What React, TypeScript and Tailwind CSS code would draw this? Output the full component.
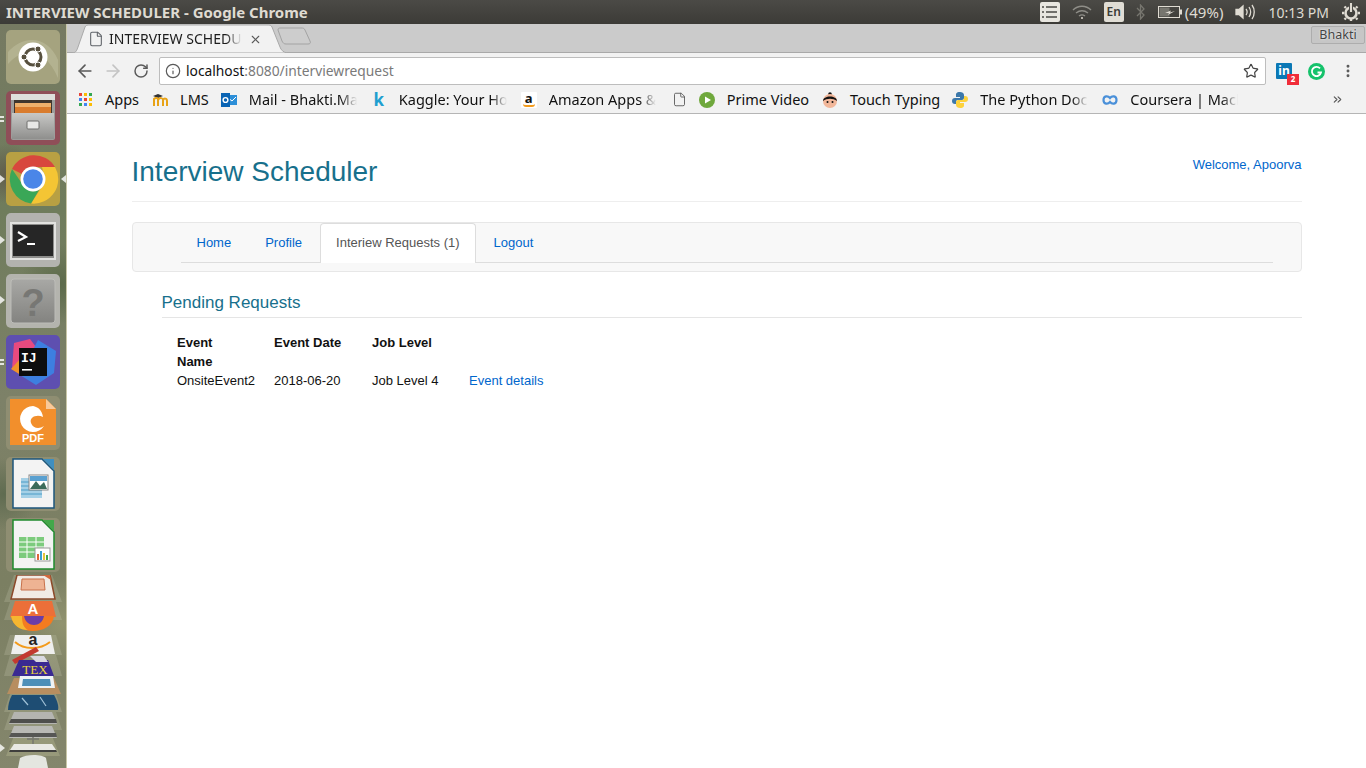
import { ArrowLeft, ArrowRight, ChevronsRight, EllipsisVertical, File, Info, RotateCw, Star, X } from 'lucide-react';

const uiFont = "font-['Noto_Sans',sans-serif]";

function UbuntuIcon() {
  return (
    <svg width="54" height="54" viewBox="0 0 54 54">
      <path d="M2 22 C18 4 42 6 52 30 L52 48 C40 20 20 14 2 34Z" fill="#c6c5a6" opacity="0.45" />
      <circle cx="27" cy="27" r="14.5" fill="#fff" />
      <circle cx="27" cy="27" r="8" fill="none" stroke="#57503f" strokeWidth="3" />
      <circle cx="18" cy="27" r="3" fill="#57503f" stroke="#fff" />
      <circle cx="32" cy="19" r="3" fill="#57503f" stroke="#fff" />
      <circle cx="32" cy="35" r="3" fill="#57503f" stroke="#fff" />
    </svg>
  );
}

function FilesIcon() {
  return (
    <svg width="54" height="54" viewBox="0 0 54 54">
      <defs>
        <linearGradient id="cabinet" x1="0" y1="0" x2="0" y2="1">
          <stop offset="0" stopColor="#c8c8c6" />
          <stop offset="1" stopColor="#8f8f8d" />
        </linearGradient>
      </defs>
      <rect x="5" y="3" width="44" height="46" rx="2" fill="#9d9d9b" />
      <rect x="5" y="3" width="44" height="6" fill="#dededc" />
      <rect x="8" y="9" width="38" height="13" fill="#3f362e" />
      <rect x="9" y="12" width="36" height="4" fill="#eeb06c" />
      <rect x="9" y="16" width="36" height="6" fill="#d97c2e" />
      <rect x="6" y="22" width="42" height="26" fill="url(#cabinet)" />
      <rect x="21" y="30" width="12" height="8" rx="1" fill="#e8e8e6" stroke="#6f6f6d" />
    </svg>
  );
}

function ChromeIcon() {
  return (
    <svg width="54" height="54" viewBox="0 0 54 54">
      <path d="M6 17 A24.5 24.5 0 0 1 49 15 L27 15 A12 12 0 0 0 16 22Z" fill="#d8473d" />
      <path d="M49 15 A24.5 24.5 0 0 1 25 51.5 L37 33 A12 12 0 0 0 37 19 L36 15Z" fill="#f4c534" />
      <path d="M6 17 L17 33 A12 12 0 0 0 33 38 L25 51.5 A24.5 24.5 0 0 1 6 17Z" fill="#3aa757" />
      <circle cx="27" cy="27" r="12.5" fill="#fff" />
      <circle cx="27" cy="27" r="9.8" fill="#4a86e8" />
    </svg>
  );
}

function TerminalIcon() {
  return (
    <svg width="54" height="54" viewBox="0 0 54 54">
      <rect x="4" y="9" width="46" height="38" fill="#e2e2e0" />
      <rect x="6" y="11" width="42" height="34" fill="#8d8d8b" />
      <rect x="7" y="12" width="40" height="31" fill="#262626" />
      <path d="M12 19 L20 24 L12 28" fill="none" stroke="#fff" strokeWidth="2.2" />
      <path d="M21 31 H29" stroke="#fff" strokeWidth="2" />
    </svg>
  );
}

function HelpIcon() {
  return (
    <svg width="54" height="54" viewBox="0 0 54 54">
      <defs>
        <linearGradient id="helpface" x1="0" y1="0" x2="0" y2="1">
          <stop offset="0" stopColor="#a8a8a5" />
          <stop offset="1" stopColor="#838380" />
        </linearGradient>
      </defs>
      <rect x="5" y="5" width="44" height="44" rx="3" fill="url(#helpface)" stroke="#bcbcb8" />
      <text x="27" y="42" textAnchor="middle" fontSize="38" fontWeight="700" fill="#777774" fontFamily="'Liberation Sans', sans-serif">?</text>
    </svg>
  );
}

function IdeaIcon() {
  return (
    <svg width="54" height="54" viewBox="0 0 54 54">
      <path d="M8 8 L24 4 L30 12 L14 38 L6 34Z" fill="#e84a7f" />
      <path d="M5 34 L14 24 L18 42Z" fill="#f0932b" />
      <path d="M32 5 L50 16 L48 38 L30 50 L14 40Z" fill="#3d7fe0" />
      <rect x="13" y="13" width="28" height="28" fill="#0d0d0d" />
      <text x="15" y="27" fontSize="13" fontWeight="700" fill="#fff" fontFamily="'Liberation Mono', monospace">IJ</text>
      <rect x="16" y="34" width="10" height="1.6" fill="#fff" />
    </svg>
  );
}

function PdfIcon() {
  return (
    <svg width="54" height="54" viewBox="0 0 54 54">
      <path d="M4 3 H40 L50 13 V49 H4Z" fill="#f28f2c" />
      <path d="M40 3 L50 13 H40Z" fill="#f8c99a" />
      <path d="M27 10 A13 13 0 1 0 38 30 C34 33 27 33 25 27 C23 21 31 18 37 21 C36 14 32 11 27 10Z" fill="#fff" />
      <text x="27" y="46" textAnchor="middle" fontSize="11" fontWeight="700" fill="#fff" fontFamily="'Liberation Sans', sans-serif">PDF</text>
    </svg>
  );
}

function DrawIcon() {
  return (
    <svg width="54" height="54" viewBox="0 0 54 54">
      <path d="M7 2 H36 L48 14 V51 H7Z" fill="#f3f3f3" stroke="#1c567c" strokeWidth="1.5" />
      <path d="M37 2 H48 V13Z" fill="#3f8fc0" />
      <path d="M15 21 H36 V41 H15Z" fill="#a5d0e6" />
      <path d="M15 25 H36 M15 29 H36 M15 33 H36 M15 37 H36" stroke="#4b9cc6" />
      <rect x="23" y="18" width="19" height="15" fill="#fff" stroke="#888" />
      <path d="M24 32 L30 24 L34 29 L38 25 L41 32Z" fill="#3c6b5b" />
      <rect x="24" y="19" width="17" height="5" fill="#5aa0d0" />
    </svg>
  );
}

function CalcIcon() {
  return (
    <svg width="54" height="54" viewBox="0 0 54 54">
      <path d="M7 2 H36 L48 14 V51 H7Z" fill="#f3f3f3" stroke="#1f8a2e" strokeWidth="1.5" />
      <path d="M37 2 H48 V13Z" fill="#43a84a" />
      <rect x="13" y="19" width="25" height="21" fill="#7ccb7d" />
      <path d="M13 24 H38 M13 29 H38 M13 34 H38 M21 19 V40 M30 19 V40" stroke="#fff" />
      <rect x="29" y="30" width="15" height="13" fill="#fff" stroke="#999" />
      <rect x="31" y="36" width="2" height="6" fill="#e0663a" />
      <rect x="34" y="33" width="2" height="9" fill="#3c9fd0" />
      <rect x="37" y="35" width="2" height="7" fill="#e8c43a" />
      <rect x="40" y="37" width="2" height="5" fill="#43a84a" />
    </svg>
  );
}

function CollapsedStack() {
  return (
    <svg width="67" height="193" viewBox="0 575 67 193" className="block">
      <g fill="#d8d8c0" opacity="0.2">
        <path d="M14 575 H52 L62 602 H4Z" />
        <path d="M10 602 H56 L62 620 H4Z" />
        <path d="M10 635 H56 L62 655 H4Z" />
        <path d="M10 655 H56 L62 676 H4Z" />
        <path d="M10 694 H56 L62 712 H4Z" />
        <path d="M10 712 H56 L62 730 H4Z" />
        <path d="M14 736 H52 L60 756 H6Z" fill="#e8e8b8" />
      </g>
      <path d="M17 575 H50 L55 599 H11Z" fill="#f1ebe4" stroke="#8c4a2a" strokeWidth="1.5" />
      <path d="M43 575 H50 L51 580Z" fill="#d2693c" />
      <path d="M22 579 H44 L45 590 H21Z" fill="#eeb393" stroke="#c8714a" />
      <path d="M15 601 H52 L56 617 H10Z" fill="#ec6f39" />
      <text x="33" y="614" textAnchor="middle" fontSize="15" fontWeight="700" fill="#fff" fontFamily="'Liberation Sans', sans-serif">A</text>
      <path d="M11 616 H54 C52 636 14 636 11 616Z" fill="#f47b20" />
      <path d="M24 616 H44 C42 628 26 628 24 616Z" fill="#6a3da8" />
      <path d="M11 616 H22 C22 624 24 628 28 630 C20 630 13 626 11 616Z" fill="#f6b730" />
      <path d="M15 635 H51 L55 654 H11Z" fill="#efefee" />
      <text x="33" y="645" textAnchor="middle" fontSize="16" fontWeight="700" fill="#222" fontFamily="'Liberation Sans', sans-serif">a</text>
      <path d="M15 642 C24 650 40 650 50 642" fill="none" stroke="#f39b1c" strokeWidth="2" />
      <path d="M12 660 L36 647 L39 651 L15 664Z" fill="#c2392f" />
      <path d="M19 660 H48 L54 676 H12Z" fill="#3a2a92" />
      <path d="M30 656 H44 L48 662 H36Z" fill="#d9d9e0" />
      <text x="35" y="674" textAnchor="middle" fontSize="13" fill="#e8d33a" fontFamily="'Liberation Serif', serif">TEX</text>
      <path d="M14 678 H54 L61 694 H7Z" fill="#b78e60" />
      <path d="M20 676 H53 L55 688 H18Z" fill="#eef2f4" />
      <path d="M23 679 H50 L51 686 H22Z" fill="#4d8fb8" />
      <path d="M12 695 H54 C57 700 59 706 58 710 H8 C8 706 9 700 12 695Z" fill="#1e4d73" />
      <path d="M22 698 L28 705 M40 697 L46 706" stroke="#9fc0d6" strokeWidth="1.2" />
      <path d="M14 712 H52 L57 724 H9Z" fill="#b4b4b0" />
      <path d="M11 719 H56 L57 723 H9Z" fill="#4e4e4c" />
      <path d="M14 726 H52 L57 738 H9Z" fill="#b9b9b5" />
      <path d="M11 733 H56 L57 737 H9Z" fill="#565654" />
      <path d="M14 744 H52 L56 750 H10Z" fill="#e9e9e4" />
      <path d="M33 737 V744 M27 739 H39" stroke="#77776f" strokeWidth="1.5" />
      <path d="M10 750 H56 L57 752 H9Z" fill="#3f3f3d" />
      <path d="M20 758 C26 754 42 754 46 758 L48 768 H18Z" fill="#e4e6e0" />
    </svg>
  );
}

function Launcher() {
  return (
    <div className="relative flex w-[67px] shrink-0 flex-col overflow-hidden border-r border-[#c9c7a8] bg-[radial-gradient(circle_at_8px_150px,#5f5a4a_0,transparent_30px),radial-gradient(circle_at_60px_260px,#5c6a4a_0,transparent_40px),radial-gradient(circle_at_4px_470px,#5f6b50_0,transparent_36px),radial-gradient(circle_at_62px_600px,#91936f_0,transparent_50px),linear-gradient(180deg,#767a62_0%,#6f7c5c_25%,#7d8168_50%,#7b7f62_75%,#84866c_100%)]">
      <div className="flex flex-col gap-[7px] pl-[6px] pt-[6px]">
        <div className="flex size-[54px] items-center justify-center rounded-[5px] bg-[#a5a37f]"><UbuntuIcon /></div>
        <div className="flex size-[54px] items-center justify-center rounded-[5px] bg-[#8f4e58]"><FilesIcon /></div>
        <div className="flex size-[54px] items-center justify-center rounded-[5px] bg-[#b8a043]"><ChromeIcon /></div>
        <div className="flex size-[54px] items-center justify-center rounded-[5px] bg-[#b3b3af]"><TerminalIcon /></div>
        <div className="flex size-[54px] items-center justify-center rounded-[5px] bg-[#b4b4ae]"><HelpIcon /></div>
        <div className="flex size-[54px] items-center justify-center rounded-[5px] bg-[#5e4fb0]"><IdeaIcon /></div>
        <div className="flex size-[54px] items-center justify-center rounded-[5px] bg-[#8f8e72]"><PdfIcon /></div>
        <div className="flex size-[54px] items-center justify-center rounded-[5px] bg-[#8f8e72]"><DrawIcon /></div>
        <div className="flex size-[54px] items-center justify-center rounded-[5px] bg-[#8f8e72]"><CalcIcon /></div>
      </div>
      <div className="mt-[3px]"><CollapsedStack /></div>
      <span className="absolute left-0 top-[92px] h-[2px] w-[4px] bg-white/80" />
      <span className="absolute left-0 top-[96px] h-[2px] w-[4px] bg-white/80" />
      <span className="absolute left-0 top-[151px] h-0 w-0 border-y-[4px] border-l-[5px] border-y-transparent border-l-white/80" />
      <span className="absolute right-0 top-[151px] h-0 w-0 border-y-[4px] border-r-[5px] border-y-transparent border-r-white/80" />
      <span className="absolute left-0 top-[212px] h-0 w-0 border-y-[4px] border-l-[5px] border-y-transparent border-l-white/80" />
      <span className="absolute left-0 top-[272px] h-0 w-0 border-y-[4px] border-l-[5px] border-y-transparent border-l-white/80" />
      <span className="absolute left-0 top-[335px] h-[2px] w-[4px] bg-white/80" />
      <span className="absolute left-0 top-[339px] h-[2px] w-[4px] bg-white/80" />
      <span className="absolute left-0 top-[720px] h-0 w-0 border-y-[4px] border-l-[5px] border-y-transparent border-l-white/80" />
    </div>
  );
}

function TopBar() {
  return (
    <div className={`flex h-[24px] shrink-0 items-center justify-between bg-gradient-to-b from-[#4b4a46] to-[#3c3b37] pl-[6px] pr-[6px] text-[#dfdbd2] ${uiFont}`}>
      <span className="text-[15px] font-bold">INTERVIEW SCHEDULER - Google Chrome</span>
      <div className="flex items-center">
        <svg width="20" height="20" viewBox="0 0 20 20">
          <rect x="0" y="0" width="20" height="20" rx="2" fill="#e8e6e0" />
          <path d="M6 5 H17 M6 10 H17 M6 15 H17" stroke="#4a4945" strokeWidth="1.4" />
          <path d="M2 5 H4 M2 10 H4 M2 15 H4" stroke="#4a4945" strokeWidth="1.4" />
        </svg>
        <svg className="ml-[12px]" width="20" height="16" viewBox="0 0 20 16" fill="none" stroke="#8f8e88" strokeWidth="1.4">
          <path d="M1 6 C6 1 14 1 19 6" />
          <path d="M4 9 C8 6 12 6 16 9" />
          <path d="M7 12 C9 10.5 11 10.5 13 12" />
          <circle cx="10" cy="14" r="1" fill="#dfdbd2" stroke="none" />
        </svg>
        <span className="ml-[12px] flex size-[20px] items-center justify-center rounded-[2px] bg-[#e0ddd5] text-[12px] font-semibold text-[#3c3b37]">En</span>
        <svg className="ml-[12px]" width="9" height="16" viewBox="0 0 9 16" fill="none" stroke="#77766f" strokeWidth="1.3">
          <path d="M1 4 L8 11 L4.5 15 V1 L8 5 L1 12" />
        </svg>
        <svg className="ml-[13px]" width="24" height="12" viewBox="0 0 24 12" fill="none">
          <rect x="0.5" y="0.5" width="21" height="11" stroke="#dfdbd2" />
          <rect x="1.5" y="1.5" width="10" height="9" fill="#77766f" />
          <path d="M7 7 L13 4.5 L12 6.5 L17 5 L10 9 L11 7Z" fill="#dfdbd2" />
          <rect x="22" y="3.5" width="2" height="5" fill="#dfdbd2" />
        </svg>
        <span className="ml-[3px] text-[15px]">(49%)</span>
        <svg className="ml-[12px]" width="20" height="16" viewBox="0 0 20 16" fill="none" stroke="#dfdbd2" strokeWidth="1.3">
          <path d="M1 5.5 H4 L8 2 V14 L4 10.5 H1Z" fill="#dfdbd2" />
          <path d="M11 5 C12.5 7 12.5 9 11 11" />
          <path d="M14 3 C16 6 16 10 14 13" />
          <path d="M17 1 C20 5 20 11 17 15" />
        </svg>
        <span className="ml-[13px] text-[14px]">10:13 PM</span>
        <svg className="ml-[13px]" width="18" height="18" viewBox="0 0 18 18" fill="none">
          <circle cx="9" cy="10" r="5.5" stroke="#dfdbd2" strokeWidth="2.6" />
          <path d="M2 10 H0 M18 10 H16 M4 5 L2.5 3.5 M14 5 L15.5 3.5 M4 15 L2.5 16.5 M14 15 L15.5 16.5 M9 16 V18" stroke="#dfdbd2" strokeWidth="2.4" />
          <path d="M9 0 V9" stroke="#3f3e3a" strokeWidth="4" />
          <path d="M9 0 V9" stroke="#dfdbd2" strokeWidth="2.2" />
        </svg>
      </div>
    </div>
  );
}

function TabStrip() {
  return (
    <div className={`relative flex h-[29px] shrink-0 items-start border-b border-[#a9a9a9] bg-[#cbcbcb] ${uiFont}`}>
      <svg className="absolute left-[5px] top-0" width="240" height="29" viewBox="0 0 240 29">
        <path d="M0 29 C4 29 5 26 6 23 L13 3 C14 1 15 1 18 1 H195 C198 1 199 1 200 3 L208 23 C209 26 211 28 215 29Z" fill="#f2f2f2" stroke="#a9a9a9" />
        <path d="M206 6 C206 4 207 4 209 4 H229 C231 4 232 4 233 6 L238 17 C239 19 238 20 236 20 H214 C212 20 211 19 210 17Z" fill="#cdcdcd" stroke="#a3a3a3" />
      </svg>
      <div className="relative ml-[21px] mt-[6px] flex items-center">
        <File size={16} strokeWidth={1.6} className="text-[#5f6368]" />
        <span className="ml-[5px] w-[133px] whitespace-nowrap text-[14px] leading-[18px] text-[#1c1c1c] [mask-image:linear-gradient(to_right,black_88%,transparent)]">INTERVIEW SCHEDU</span>
        <X size={13} strokeWidth={2} className="ml-[7px] text-[#5a5a5a]" />
      </div>
      <div className="absolute right-[1px] top-[2px] flex h-[18px] w-[54px] items-center justify-center rounded-[2px] border border-[#adadad] bg-[#c6c6c6] text-[12.5px] text-[#444] [text-shadow:0_0_2px_#fff]">Bhakti</div>
    </div>
  );
}

function Toolbar() {
  return (
    <div className={`flex h-[33px] shrink-0 items-center bg-[#f2f2f2] pt-[3px] ${uiFont}`}>
      <ArrowLeft size={20} strokeWidth={2} className="ml-[8px] text-[#5a5a5a]" />
      <ArrowRight size={20} strokeWidth={2} className="ml-[8px] text-[#c4c4c4]" />
      <RotateCw size={16} strokeWidth={2.2} className="ml-[10px] text-[#5a5a5a]" />
      <div className="ml-[10px] flex h-[28px] w-[1107px] items-center rounded-[2px] border border-[#bdbdbd] bg-white pl-[5px] pr-[6px]">
        <Info size={16} strokeWidth={1.8} className="text-[#5a5a5a]" />
        <span className="ml-[5px] text-[13.8px] text-[#111]">localhost<span className="text-[#7a7a7a]">:8080/interviewrequest</span></span>
        <Star size={16} strokeWidth={1.8} className="ml-auto text-[#444]" />
      </div>
      <div className="relative ml-[10px] size-[17px] shrink-0">
        <div className="flex size-[16px] items-center justify-center rounded-[1px] bg-[#0b78b5] text-[12px] font-bold leading-none text-white">in</div>
        <span className="absolute -bottom-[5px] -right-[6px] flex h-[11px] w-[12px] items-center justify-center bg-[#f02d3a] text-[8px] font-bold leading-none text-white">2</span>
      </div>
      <svg className="ml-[15px] shrink-0" width="17" height="17" viewBox="0 0 17 17">
        <circle cx="8.5" cy="8.5" r="8.5" fill="#15c26b" />
        <path d="M12 5.4 A4.6 4.6 0 1 0 13 9.5 H9.5" fill="none" stroke="#fff" strokeWidth="1.8" />
      </svg>
      <EllipsisVertical size={16} strokeWidth={2.4} className="ml-[15px] shrink-0 text-[#5a5a5a]" />
    </div>
  );
}

function AppsGrid() {
  const colours = ['#ea4335', '#fbbc05', '#34a853', '#4285f4', '#ea4335', '#fbbc05', '#34a853', '#4285f4', '#fbbc05'];
  return (
    <span className="grid size-[13px] grid-cols-3 gap-[2px]">
      {colours.map((c, i) => <span key={i} className="size-[3px]" style={{ backgroundColor: c }} />)}
    </span>
  );
}

function Bookmark({ icon, label, width, gap }: { icon: React.ReactNode; label: string; width?: string; gap: string }) {
  return (
    <div className={`flex items-center ${gap}`}>
      <span className="flex w-[16px] justify-center">{icon}</span>
      <span className={`ml-[12px] whitespace-nowrap ${width ?? ''}`}>{label}</span>
    </div>
  );
}

function BookmarksBar() {
  const fade = '[mask-image:linear-gradient(to_right,black_85%,transparent)]';
  return (
    <div className={`flex h-[28px] shrink-0 items-center border-b border-[#b5b5b5] bg-[#f2f2f2] pl-[10px] text-[14.5px] text-[#111] ${uiFont}`}>
      <Bookmark gap="ml-0" label="Apps" icon={<AppsGrid />} />
      <Bookmark
        gap="ml-[13px]"
        label="LMS"
        icon={<svg width="16" height="14" viewBox="0 0 16 14"><path d="M1 3 L6 1 L11 3 L6 5Z" fill="#333" /><path d="M2 13 V6 C4 4 6 5 6 7 V13 M6 7 C8 4 11 5 11 7 V13 M11 7 C12 5 15 5 15 8 V13" fill="none" stroke="#e8a317" strokeWidth="2" /></svg>}
      />
      <Bookmark
        gap="ml-[12px]"
        label="Mail - Bhakti.Ma"
        width={`w-[108px] ${fade}`}
        icon={<svg width="16" height="16" viewBox="0 0 16 16"><rect x="5" y="3" width="11" height="10" fill="#2d8fd8" /><path d="M6 5 L11 9 L15 5" fill="none" stroke="#fff" /><rect x="0" y="1" width="9" height="14" fill="#0a64b4" /><circle cx="4.5" cy="8" r="2.4" fill="none" stroke="#fff" strokeWidth="1.4" /></svg>}
      />
      <Bookmark
        gap="ml-[14px]"
        label="Kaggle: Your Ho"
        width={`w-[108px] ${fade}`}
        icon={<span className="text-[17px] font-bold leading-none text-[#1f9fd0]">k</span>}
      />
      <Bookmark
        gap="ml-[14px]"
        label="Amazon Apps &"
        width={`w-[107px] ${fade}`}
        icon={<span className="relative flex size-[16px] justify-center rounded-[1px] bg-white text-[13px] font-bold leading-[13px] text-[#111]">a<span className="absolute bottom-[1px] left-[2px] h-[3px] w-[12px] rounded-b-full border-b-2 border-[#f39b1c]" /></span>}
      />
      <File size={15} strokeWidth={1.4} className="ml-[16px] text-[#555]" />
      <Bookmark
        gap="ml-[12px]"
        label="Prime Video"
        icon={<svg width="16" height="16" viewBox="0 0 16 16"><circle cx="8" cy="8" r="8" fill="#6fa83c" /><path d="M6 4.5 L12 8 L6 11.5Z" fill="#fff" /></svg>}
      />
      <Bookmark
        gap="ml-[13px]"
        label="Touch Typing"
        icon={<svg width="16" height="16" viewBox="0 0 16 16"><circle cx="8" cy="2" r="1.8" fill="#111" /><circle cx="8" cy="9" r="7" fill="#f2b79a" /><path d="M1 9 C1 3 15 3 15 9 C11 6 5 6 1 9Z" fill="#111" /><circle cx="5.5" cy="10" r="1" fill="#111" /><circle cx="10.5" cy="10" r="1" fill="#111" /></svg>}
      />
      <Bookmark
        gap="ml-[12px]"
        label="The Python Doc"
        width={`w-[108px] ${fade}`}
        icon={<svg width="16" height="16" viewBox="0 0 16 16"><path d="M8 0 C4 0 4 2 4 3 V5 H8 V6 H3 C1 6 0 7 0 9 C0 11 1 12 3 12 H4 V10 C4 8.5 5 8 6 8 H10 C11 8 12 7 12 6 V3 C12 1 10 0 8 0Z" fill="#3c78aa" /><path d="M8 16 C12 16 12 14 12 13 V11 H8 V10 H13 C15 10 16 9 16 7 C16 5 15 4 13 4 H12 V6 C12 7.5 11 8 10 8 H6 C5 8 4 9 4 10 V13 C4 15 6 16 8 16Z" fill="#fdd23c" /></svg>}
      />
      <Bookmark
        gap="ml-[14px]"
        label="Coursera | Mach"
        width={`w-[108px] ${fade}`}
        icon={<svg width="16" height="10" viewBox="0 0 16 10" fill="none" stroke="#4a90d9" strokeWidth="2.2"><path d="M8 3 C6 0.5 1.5 0.5 1.5 5 C1.5 9.5 6 9.5 8 7 C10 9.5 14.5 9.5 14.5 5 C14.5 0.5 10 0.5 8 3Z" /></svg>}
      />
      <ChevronsRight size={13} strokeWidth={2} className="ml-auto mr-[22px] text-[#555]" />
    </div>
  );
}

function NavTab({ label, active }: { label: string; active?: boolean }) {
  if (active) {
    return (
      <li className="-mb-px mr-[2px] rounded-t-[4px] border border-b-0 border-[#ddd] bg-white px-[15px] pb-[11px] pt-[9px] leading-[19px] text-[#555]">{label}</li>
    );
  }
  return (
    <li className="mr-[2px] border border-transparent px-[15px] pb-[11px] pt-[9px] leading-[19px] text-[#0066cc]">{label}</li>
  );
}

function Page() {
  return (
    <div className="flex-1 bg-white pl-[64.5px] pr-[64.5px] pt-[41px] font-['Liberation_Sans',Arial,sans-serif] text-[13px] text-[#111]">
      <div className="flex items-start justify-between border-b border-[#eee] pb-[12px]">
        <h1 className="text-[28px] leading-[34px] text-[#17708c]">Interview Scheduler</h1>
        <span className="leading-[19px] text-[#0066cc]">Welcome, Apoorva</span>
      </div>
      <div className="mt-[20px] h-[50px] rounded-[4px] border border-[#e7e7e7] bg-[#f8f8f8] pl-[48px] pr-[28px]">
        <ul className="flex h-[40px] border-b border-[#ddd]">
          <NavTab label="Home" />
          <NavTab label="Profile" />
          <NavTab label="Interiew Requests (1)" active />
          <NavTab label="Logout" />
        </ul>
      </div>
      <div className="ml-[30px] mt-[21px]">
        <h2 className="border-b border-[#e5e5e5] pb-[4px] text-[17px] leading-[20px] text-[#17708c]">Pending Requests</h2>
        <table className="ml-[15.5px] mt-[15px] w-[400px] table-fixed border-collapse leading-[19px]">
          <thead>
            <tr className="text-left align-top font-bold">
              <th className="w-[97px] pr-[30px]">Event Name</th>
              <th className="w-[98px]">Event Date</th>
              <th className="w-[97px]">Job Level</th>
              <th />
            </tr>
          </thead>
          <tbody>
            <tr>
              <td>OnsiteEvent2</td>
              <td>2018-06-20</td>
              <td>Job Level 4</td>
              <td className="text-[#0066cc]">Event details</td>
            </tr>
          </tbody>
        </table>
      </div>
    </div>
  );
}

export default function App() {
  return (
    <div className="flex h-screen w-full flex-col overflow-hidden">
      <TopBar />
      <div className="flex min-h-0 flex-1">
        <Launcher />
        <div className="flex min-w-0 flex-1 flex-col">
          <TabStrip />
          <Toolbar />
          <BookmarksBar />
          <Page />
        </div>
      </div>
    </div>
  );
}
